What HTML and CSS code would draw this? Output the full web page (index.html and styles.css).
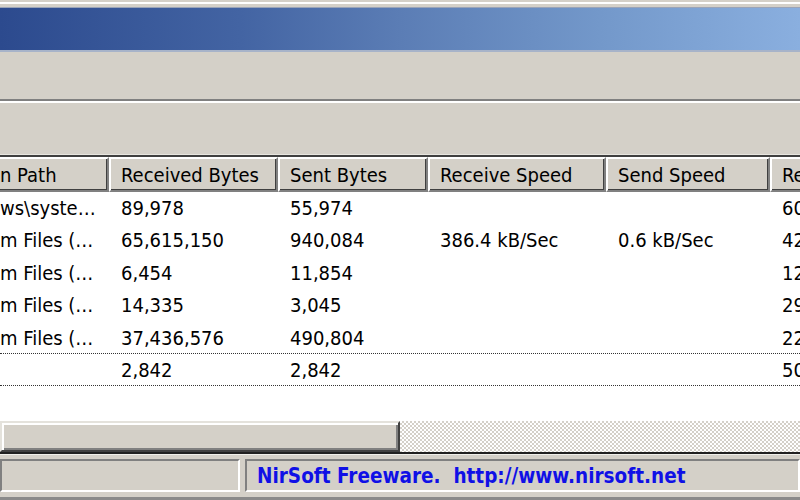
FILE: index.html
```html
<!DOCTYPE html>
<html>
<head>
<meta charset="utf-8">
<link rel="stylesheet" href="styles.css">
</head>
<body>
<div class="window">
  <div class="topedge"></div>
  <div class="titlebar"></div>
  <div class="menubar"></div>
  <div class="sep"></div>
  <div class="toolbar"></div>
  <div class="list">
    <div class="header">
      <div class="hcell c1">n Path</div>
      <div class="hcell c2">Received Bytes</div>
      <div class="hcell c3">Sent Bytes</div>
      <div class="hcell c4">Receive Speed</div>
      <div class="hcell c5">Send Speed</div>
      <div class="hcell c6">Received Packets</div>
    </div>
    <div class="rows">
      <div class="row"><div class="cell c1">ws\syste…</div><div class="cell c2">89,978</div><div class="cell c3">55,974</div><div class="cell c4"></div><div class="cell c5"></div><div class="cell c6">60</div></div>
      <div class="row"><div class="cell c1">m Files (…</div><div class="cell c2">65,615,150</div><div class="cell c3">940,084</div><div class="cell c4">386.4 kB/Sec</div><div class="cell c5">0.6 kB/Sec</div><div class="cell c6">42</div></div>
      <div class="row"><div class="cell c1">m Files (…</div><div class="cell c2">6,454</div><div class="cell c3">11,854</div><div class="cell c4"></div><div class="cell c5"></div><div class="cell c6">12</div></div>
      <div class="row"><div class="cell c1">m Files (…</div><div class="cell c2">14,335</div><div class="cell c3">3,045</div><div class="cell c4"></div><div class="cell c5"></div><div class="cell c6">29</div></div>
      <div class="row"><div class="cell c1">m Files (…</div><div class="cell c2">37,436,576</div><div class="cell c3">490,804</div><div class="cell c4"></div><div class="cell c5"></div><div class="cell c6">22</div></div>
      <div class="row focus"><div class="cell c1"></div><div class="cell c2">2,842</div><div class="cell c3">2,842</div><div class="cell c4"></div><div class="cell c5"></div><div class="cell c6">50</div></div>
    </div>
  </div>
  <div class="hscroll">
    <div class="thumb"></div>
    <div class="track"></div>
  </div>
  <div class="statusbar">
    <div class="panel p1"></div>
    <div class="panel p2"><span class="credit">NirSoft Freeware.  http://www.nirsoft.net</span></div>
  </div>
</div>
</body>
</html>
```

FILE: styles.css
```css
html, body {
  margin: 0;
  padding: 0;
}
body {
  width: 800px;
  height: 500px;
  overflow: hidden;
  background: #d4d0c8;
}
.window {
  width: 800px;
  height: 500px;
  overflow: hidden;
  display: flex;
  flex-direction: column;
  background: #d4d0c8;
  font-family: "DejaVu Sans Condensed", "DejaVu Sans", sans-serif;
  font-stretch: semi-condensed;
  font-size: 20px;
  color: #000;
}
.topedge {
  height: 8px;
  flex: none;
  background: linear-gradient(#d4d0c8 0 2px, #ffffff 2px 4px, #d4d0c8 4px 7px, #9aa4b8 7px 8px);
}
.titlebar {
  height: 42px;
  flex: none;
  background: linear-gradient(90deg, #2c4a8e 0%, #4364a3 30%, #5b7db5 50%, #7398ca 75%, #8aafdf 100%);
  border-bottom: 2px solid #a7b3c9;
}
.menubar {
  height: 47px;
  flex: none;
}
.sep {
  height: 4px;
  flex: none;
  background: linear-gradient(#808080 0 2px, #ffffff 2px 4px);
}
.toolbar {
  height: 51px;
  flex: none;
  border-bottom: 1px solid #e8e6e0;
}
.list {
  height: 264px;
  flex: none;
  background: #fff;
  border-top: 2px solid #404040;
  display: flex;
  flex-direction: column;
}
.header {
  display: flex;
  height: 35px;
  flex: none;
  background: #d4d0c8;
}
.hcell {
  box-sizing: border-box;
  height: 35px;
  line-height: 33px;
  padding-left: 10px;
  white-space: nowrap;
  overflow: hidden;
  flex: none;
  border-top: 2px solid #fff;
  border-left: 2px solid #fff;
  border-right: 2px solid #808080;
  border-bottom: 2px solid #808080;
  box-shadow: inset -1px -1px 0 #404040;
}
.hcell.c1 { border-left: none; padding-left: 0; }
.c1 { width: 109px; }
.c2 { width: 169px; }
.c3 { width: 150px; }
.c4 { width: 178px; }
.c5 { width: 164px; }
.c6 { width: 120px; }
.rows {
  display: flex;
  flex-direction: column;
}
.row {
  display: flex;
  height: 32.4px;
  box-sizing: border-box;
}
.cell {
  box-sizing: border-box;
  flex: none;
  padding-left: 12px;
  line-height: 33px;
  white-space: nowrap;
  overflow: hidden;
}
.cell.c1 { padding-left: 0; }
.row:nth-child(5) {
  border-bottom: 1px dotted #333;
}
.row.focus {
  border-bottom: 1px dotted #333;
  height: 32px;
}
.row.focus .cell { line-height: 32px; }
.row:nth-child(5) .cell { line-height: 32px; }
.hscroll {
  height: 31px;
  flex: none;
  display: flex;
  border-bottom: 2px solid #202020;
}
.thumb {
  width: 400px;
  flex: none;
  box-sizing: border-box;
  background: #d4d0c8;
  border-top: 2px solid #e4e2dc;
  border-left: 2px solid #e4e2dc;
  border-right: 2px solid #404040;
  border-bottom: 2px solid #404040;
  box-shadow: inset 2px 2px 0 #ffffff, inset -2px -2px 0 #808080;
}
.track {
  flex: 1;
  background-color: #ffffff;
  background-image: repeating-conic-gradient(#d4d0c8 0 25%, #ffffff 0 50%);
  background-size: 4px 4px;
}
.statusbar {
  flex: 1;
  display: flex;
  gap: 5px;
  padding: 4px 0 8px 0;
  border-top: 1px solid #f0efea;
  box-sizing: border-box;
  box-shadow: inset 0 -3px 0 #8a8a8a;
}
.panel {
  box-sizing: border-box;
  border-top: 2px solid #808080;
  border-left: 2px solid #808080;
  border-bottom: 2px solid #fff;
  border-right: 2px solid #fff;
  display: flex;
  align-items: center;
}
.p1 { width: 240px; flex: none; }
.p2 { flex: 1; padding-left: 10px; }
.credit {
  white-space: pre;
  color: #1010e6;
  font-weight: bold;
  font-size: 20.5px;
}
```
